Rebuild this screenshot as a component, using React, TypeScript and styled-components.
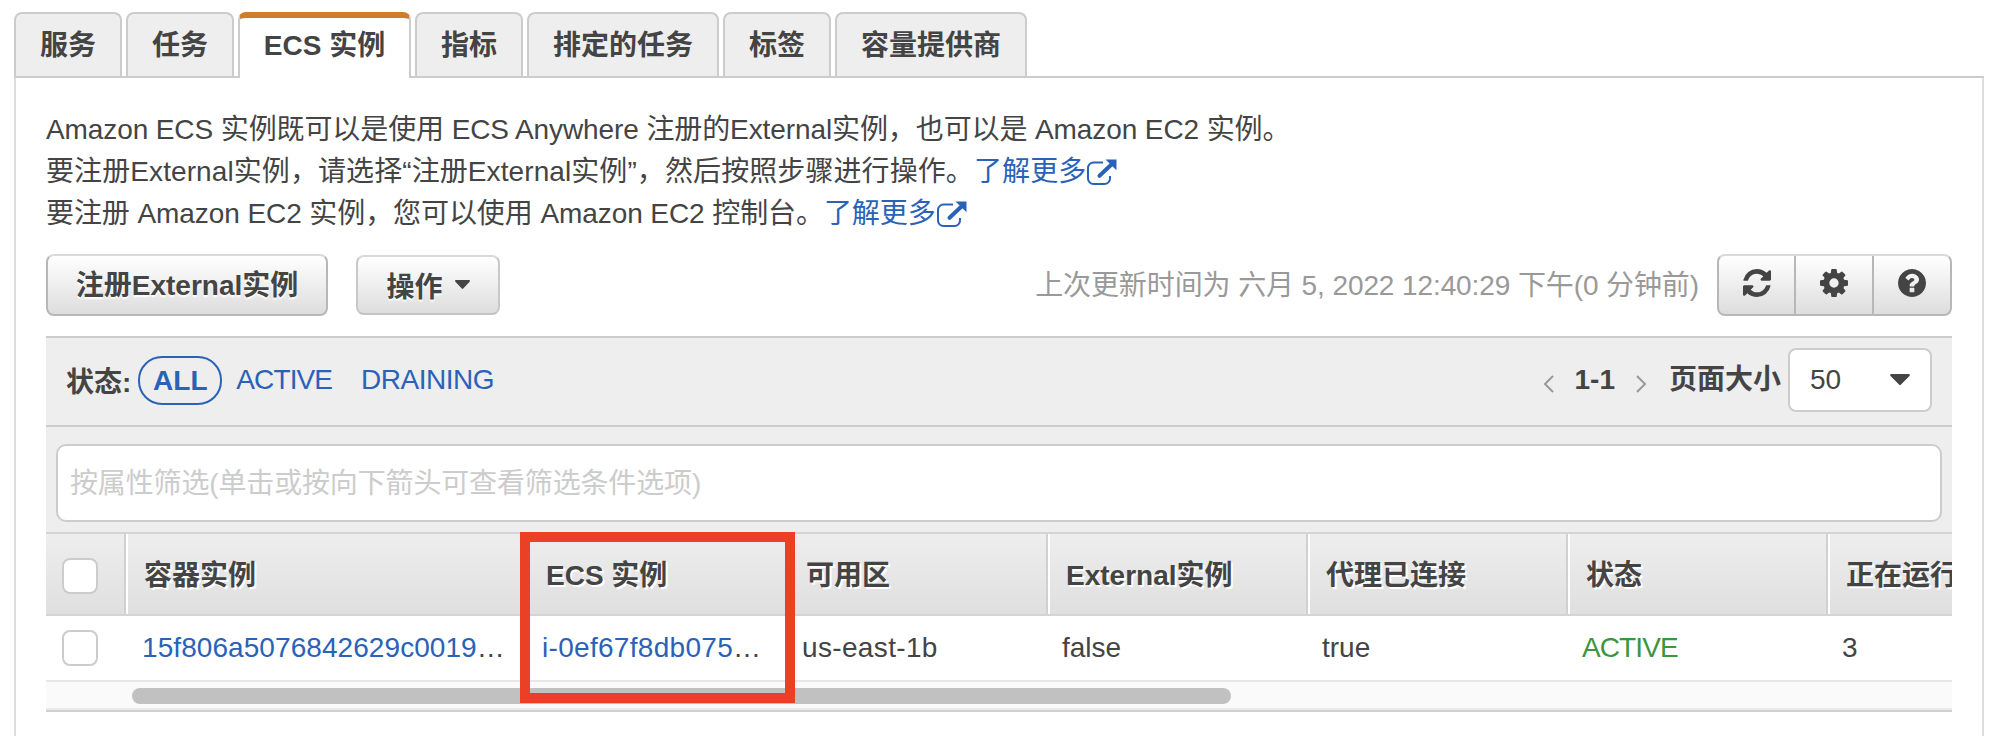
import React from "react";
import styled, { createGlobalStyle, css } from "styled-components";

const Global = createGlobalStyle`
  * { box-sizing: border-box; }
  body {
    margin: 0;
    background: #fff;
    color: #444;
    font: 28px/42px "Liberation Sans", "Noto Sans CJK SC", sans-serif;
    overflow: hidden;
  }
  button { font: inherit; color: inherit; }
`;

const Page = styled.main`
  width: 1998px;
  height: 736px;
  padding: 12px 14px 0;
  overflow: hidden;
`;

const Tabs = styled.nav`
  display: flex;
  gap: 4px;
  height: 66px;
  border-bottom: 2px solid #ccc;
`;

const Tab = styled.button<{ $active?: boolean }>`
  height: 64px;
  padding: 2px 24px 0;
  border: 2px solid #ccc;
  border-bottom: 0;
  border-radius: 8px 8px 0 0;
  background: #eee;
  font-weight: bold;
  line-height: 42px;
  white-space: nowrap;
  ${(p) =>
    p.$active &&
    css`
      width: 173px;
      height: 66px;
      padding: 0 0 4px;
      border-top: 6px solid #d17c2b;
      background: #fff;
    `}
`;

const Panel = styled.section`
  height: 660px;
  padding: 31px 30px 0;
  border: solid #ddd;
  border-width: 0 2px;
`;

const Intro = styled.p`
  margin: 0;
  height: 145px;
  white-space: nowrap;
`;

const Line = styled.span<{ $spacing?: number }>`
  display: flex;
  align-items: center;
  height: 42px;
  letter-spacing: ${(p) => p.$spacing ?? 0}px;
`;

const Link = styled.a`
  display: inline-flex;
  align-items: center;
  color: #2a62b8;
`;

const Toolbar = styled.div`
  display: flex;
  align-items: center;
  height: 62px;
  margin-bottom: 20px;
`;

const raised = css`
  border: 2px solid #b7b7b7;
  border-top-color: #d9d9d9;
  background: linear-gradient(#fff, #ddd);
`;

const Button = styled.button<{ $width: number; $light?: boolean }>`
  ${raised}
  display: flex;
  align-items: center;
  justify-content: center;
  gap: 12px;
  width: ${(p) => p.$width}px;
  height: ${(p) => (p.$light ? 60 : 62)}px;
  margin-right: 28px;
  padding: ${(p) => (p.$light ? "6px 0 0" : "2px 0 0")};
  border-radius: 8px;
  font-weight: bold;
  text-shadow: 0 2px 2px #fff;
  white-space: nowrap;
  ${(p) => p.$light && "border-color: #d9d9d9 #c8c8c8 #c4c4c4;"}
  svg { margin-bottom: 8px; }
`;

const Updated = styled.span`
  margin-left: auto;
  padding-top: 2px;
  color: #999;
  letter-spacing: -0.1px;
  white-space: nowrap;
`;

const IconGroup = styled.div`
  ${raised}
  display: flex;
  width: 235px;
  height: 62px;
  margin-left: 18px;
  border-radius: 8px;
`;

const IconButton = styled.button`
  display: flex;
  flex: 0 0 78px;
  align-items: center;
  justify-content: center;
  padding: 0 0 4px;
  border: 0;
  border-left: 2px solid #b7b7b7;
  background: none;
  &:first-child { flex-basis: 75px; border-left: 0; }
`;

const FilterBar = styled.div`
  display: flex;
  align-items: center;
  height: 91px;
  padding: 0 20px 3px;
  border: solid #ccc;
  border-width: 2px 0;
  background: #eee;
`;

const StatusLabel = styled.b`
  padding-top: 5px;
  margin-right: 7px;
`;

const Status = styled.a<{ $selected?: boolean; $spacing?: number }>`
  margin-right: 29px;
  color: #2a62b8;
  letter-spacing: ${(p) => p.$spacing ?? 0}px;
  ${(p) =>
    p.$selected &&
    css`
      width: 84px;
      height: 49px;
      margin-right: 14px;
      border: 2px solid #2a62b8;
      border-radius: 24px;
      font-weight: bold;
      line-height: 46px;
      text-align: center;
    `}
`;

const Pager = styled.div`
  display: flex;
  align-items: center;
  margin-left: auto;
  font-weight: bold;
`;

const PageRange = styled.span`
  margin: 0 20px;
`;

const PageSizeLabel = styled.span`
  margin: 0 7px 0 22px;
`;

const PageSize = styled.button`
  display: flex;
  align-items: center;
  justify-content: space-between;
  width: 144px;
  height: 64px;
  padding: 0 20px;
  border: 2px solid #ccc;
  border-radius: 8px;
  background: #fff;
  font-weight: normal;
  svg { margin-bottom: 2px; }
`;

const ChevronIcon = styled.svg`
  margin-top: 8px;
`;

const SearchRow = styled.div`
  height: 105px;
  padding: 17px 10px 10px;
  background: #eee;
`;

const Search = styled.input`
  display: block;
  width: 100%;
  height: 78px;
  padding: 2px 12px 0;
  border: 2px solid #ccc;
  border-radius: 10px;
  outline: 0;
  background: #fff;
  font: inherit;
  letter-spacing: -0.15px;
  &::placeholder { color: #ccc; opacity: 1; }
`;

const TableFrame = styled.div`
  position: relative;
  border-bottom: 2px solid #d0d0d0;
`;

const TableClip = styled.div`
  overflow: hidden;
`;

const Row = styled.div<{ $head?: boolean }>`
  display: grid;
  grid-template-columns: 80px 402px repeat(6, 260px);
  width: 2042px;
  height: ${(p) => (p.$head ? 84 : 66)}px;
  border-bottom: 2px solid ${(p) => (p.$head ? "#d4d4d4" : "#e7e7e7")};
  ${(p) =>
    p.$head &&
    css`
      border-top: 2px solid #d4d4d4;
      background: linear-gradient(#eee, #dfdfdf);
      font-weight: bold;
      text-shadow: 2px 2px 0 #fff;
    `}
`;

const HeadCell = styled.div`
  display: flex;
  align-items: center;
  padding: 3px 0 0 16px;
  border-left: 2px solid #fff;
  border-right: 2px solid #d0d0d0;
  white-space: nowrap;
  &:first-child { padding-top: 4px; border-left: 0; }
`;

const Cell = styled.div<{ $color?: string; $spacing?: number }>`
  display: flex;
  align-items: center;
  padding: 0 14px 1px;
  color: ${(p) => p.$color ?? "#444"};
  letter-spacing: ${(p) => p.$spacing ?? 0}px;
  white-space: nowrap;
  &:nth-child(-n + 2) { padding-left: 16px; }
  &:first-child { padding-bottom: 0; }
`;

const Check = styled.span`
  width: 36px;
  height: 36px;
  border: 2px solid #ccc;
  border-radius: 8px;
  background: #fff;
`;

const ScrollTrack = styled.div`
  height: 28px;
  padding: 6px 0 0 86px;
  border-bottom: 2px solid #eaeaea;
  background: #fafafa;
`;

const ScrollThumb = styled.div`
  width: 1099px;
  height: 16px;
  border-radius: 8px;
  background: #c1c1c1;
`;

const Highlight = styled.div`
  position: absolute;
  left: 474px;
  top: 0;
  width: 275px;
  height: 171px;
  border: 10px solid #ea4025;
`;

const ExternalIcon = styled.svg`
  margin-left: 1px;
`;

const External = () => (
  <ExternalIcon width="30" height="26" viewBox="0 0 30 26" fill="none">
    <path d="M16 3.500H6.500a5.500 5.500 0 0 0-5.500 5.500v10.500A5.500 5.500 0 0 0 6.500 25H17.500a5.500 5.500 0 0 0 5.500-5.500V17" stroke="#2a62b8" strokeWidth="2" />
    <path d="M12.500 16.800 25 5" stroke="#2a62b8" strokeWidth="4" strokeLinecap="round" />
    <path d="M18.500.500H29.500v10.800z" fill="#2a62b8" />
  </ExternalIcon>
);

const Glyph = ({ d }: { d: string }) => (
  <svg width="28" height="28" viewBox="0 0 1536 1536" fill="#444">
    <path d={d} />
  </svg>
);

const refreshPath =
  "M1511 928q0 5-1 7-64 268-268 434.5t-478 166.5q-146 0-282.500-55t-243.500-157l-129 129q-19 19-45 19t-45-19-19-45v-448q0-26 19-45t45-19h448q26 0 45 19t19 45-19 45l-137 137q71 66 161 102t187 36q134 0 250-65t186-179q11-17 53-117 8-23 30-23h192q13 0 22.500 9.500t9.500 22.500zm25-800v448q0 26-19 45t-45 19h-448q-26 0-45-19t-19-45 19-45l138-138q-148-137-349-137-134 0-250 65t-186 179q-11 17-53 117-8 23-30 23h-199q-13 0-22.500-9.500t-9.500-22.500v-7q65-268 270-434.500t480-166.500q146 0 284 55.500t245 156.500l130-129q19-19 45-19t45 19 19 45z";

const gearPath =
  "M1024 768q0-106-75-181t-181-75-181 75-75 181 75 181 181 75 181-75 75-181zm512-109v222q0 12-8 23t-20 13l-185 28q-19 54-39 91 35 50 107 138 10 12 10 25t-9 23q-27 37-99 108t-94 71q-12 0-26-9l-138-108q-44 23-91 38-16 136-29 186-7 28-36 28h-222q-14 0-24.500-8.500t-11.500-21.500l-28-184q-49-16-90-37l-141 107q-10 9-25 9-14 0-25-11-126-114-165-168-7-10-7-23 0-12 8-23 15-21 51-66.500t54-70.500q-27-50-41-99l-183-27q-13-2-21-12.500t-8-23.500v-222q0-12 8-23t19-13l186-28q14-46 39-92-40-57-107-138-10-12-10-24 0-10 9-23 26-36 98.500-107.500t94.500-71.500q13 0 26 10l138 107q44-23 91-38 16-136 29-186 7-28 36-28h222q14 0 24.500 8.500t11.500 21.500l28 184q49 16 90 37l142-107q9-9 24-9 13 0 25 10 129 119 165 170 7 8 7 22 0 12-8 23-15 21-51 66.500t-54 70.500q26 50 41 98l183 28q13 2 21 12.500t8 23.500z";

const helpPath =
  "M896 1248v-192q0-14-9-23t-23-9h-192q-14 0-23 9t-9 23v192q0 14 9 23t23 9h192q14 0 23-9t9-23zm256-672q0-88-55.500-163t-138.500-116-170-41q-243 0-371 213-15 24 8 42l132 100q7 6 19 6 16 0 25-12 53-68 86-92 34-24 86-24 48 0 85.500 26t37.500 59q0 38-20 61t-68 45q-63 28-115.500 86.500t-52.500 125.500v36q0 14 9 23t23 9h192q14 0 23-9t9-23q0-19 21.500-49.500t54.500-49.500q32-18 49-28.500t46-35 44.500-48 28-60.500 12.500-81zm384 192q0 209-103 385.500t-279.500 279.500-385.500 103-385.500-103-279.500-279.500-103-385.500 103-385.500 279.500-279.500 385.500-103 385.500 103 279.500 279.500 103 385.500z";

const Caret = ({ w, h }: { w: number; h: number }) => (
  <svg width={w} height={h} viewBox="0 0 20 11" preserveAspectRatio="none" fill="#444">
    <path d="M1 0h18q1.500.5.500 2L11 10.500q-1 1-2 0L.5 2Q-.5.500 1 0z" />
  </svg>
);

const Chevron = ({ right }: { right?: boolean }) => (
  <ChevronIcon width="12" height="18" viewBox="0 0 12 18" fill="none" stroke="#999" strokeWidth="2">
    <path d={right ? "M2 1l8 8-8 8" : "M10 1 2 9l8 8"} />
  </ChevronIcon>
);

const tabs = ["服务", "任务", "ECS 实例", "指标", "排定的任务", "标签", "容量提供商"];
const columns = ["容器实例", "ECS 实例", "可用区", "External实例", "代理已连接", "状态", "正在运行"];

export default function App() {
  return (
    <Page lang="zh-CN">
      <Global />
      <Tabs>
        {tabs.map((t) => (
          <Tab key={t} $active={t === "ECS 实例"}>{t}</Tab>
        ))}
      </Tabs>
      <Panel>
        <Intro>
          <Line $spacing={-0.1}>Amazon ECS 实例既可以是使用 ECS Anywhere 注册的External实例，也可以是 Amazon EC2 实例。</Line>
          <Line $spacing={0.09}>
            要注册External实例，请选择“注册External实例”，然后按照步骤进行操作。<Link>了解更多<External /></Link>
          </Line>
          <Line $spacing={-0.08}>
            要注册 Amazon EC2 实例，您可以使用 Amazon EC2 控制台。<Link>了解更多<External /></Link>
          </Line>
        </Intro>
        <Toolbar>
          <Button $width={282}>注册External实例</Button>
          <Button $width={144} $light>操作<Caret w={15} h={9} /></Button>
          <Updated>上次更新时间为 六月 5, 2022 12:40:29 下午(0 分钟前)</Updated>
          <IconGroup>
            <IconButton aria-label="刷新"><Glyph d={refreshPath} /></IconButton>
            <IconButton aria-label="设置"><Glyph d={gearPath} /></IconButton>
            <IconButton aria-label="帮助"><Glyph d={helpPath} /></IconButton>
          </IconGroup>
        </Toolbar>
        <FilterBar>
          <StatusLabel>状态:</StatusLabel>
          <Status $selected>ALL</Status>
          <Status $spacing={-0.9}>ACTIVE</Status>
          <Status $spacing={-0.5}>DRAINING</Status>
          <Pager>
            <Chevron />
            <PageRange>1-1</PageRange>
            <Chevron right />
            <PageSizeLabel>页面大小</PageSizeLabel>
            <PageSize>50<Caret w={20} h={11} /></PageSize>
          </Pager>
        </FilterBar>
        <SearchRow>
          <Search placeholder="按属性筛选(单击或按向下箭头可查看筛选条件选项)" />
        </SearchRow>
        <TableFrame>
          <TableClip>
            <Row $head>
              <HeadCell><Check /></HeadCell>
              {columns.map((c) => <HeadCell key={c}>{c}</HeadCell>)}
            </Row>
            <Row>
              <Cell><Check /></Cell>
              <Cell $spacing={0.07}><Link>15f806a5076842629c0019</Link>…</Cell>
              <Cell $spacing={0.3}><Link>i-0ef67f8db075</Link>…</Cell>
              <Cell $spacing={0.35}>us-east-1b</Cell>
              <Cell>false</Cell>
              <Cell>true</Cell>
              <Cell $color="#3c963c" $spacing={-0.9}>ACTIVE</Cell>
              <Cell>3</Cell>
            </Row>
          </TableClip>
          <ScrollTrack><ScrollThumb /></ScrollTrack>
          <Highlight />
        </TableFrame>
      </Panel>
    </Page>
  );
}
